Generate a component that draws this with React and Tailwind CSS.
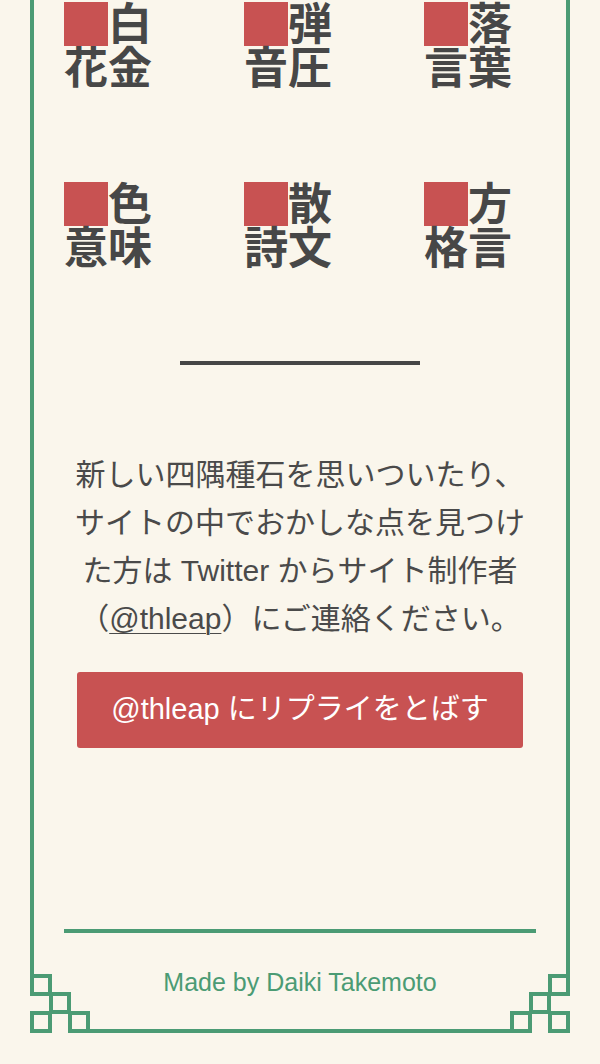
const items = [
  ['白', '花', '金'],
  ['弾', '音', '圧'],
  ['落', '言', '葉'],
  ['色', '意', '味'],
  ['散', '詩', '文'],
  ['方', '格', '言'],
]

function Corner({ flip }) {
  const xs = flip ? [40, 21, 40, 2] : [2, 21, 2, 40]
  const ys = [2, 20, 39, 39]
  return (
    <svg width="60" height="59" viewBox="0 0 60 59" className="flex-none">
      {xs.map((x, i) => (
        <rect key={i} x={x} y={ys[i]} width="18" height="18" fill="none" stroke="#4b9b74" strokeWidth="4" />
      ))}
    </svg>
  )
}

function Item({ chars }) {
  return (
    <div className="grid grid-cols-[44px_44px] grid-rows-[44px_44px] text-[44px] font-bold leading-[46px] text-[#474747]">
      <span className="bg-[#c85252]" />
      {chars.map((c, i) => (
        <span key={i} className="text-center">{c}</span>
      ))}
    </div>
  )
}

export default function App() {
  return (
    <div
      className="h-[1064px] w-[600px] overflow-hidden bg-[#faf6ec]"
      style={{ fontFamily: '"Liberation Sans", "Noto Sans CJK JP", sans-serif' }}
    >
      <div className="mx-[30px] flex flex-col border-x-4 border-[#4b9b74] pb-[41px] pt-[2px]">
        <div className="grid grid-cols-[88px_88px_88px] gap-[92px] pl-[30px]">
          {items.map(([first, ...rest]) => (
            <Item key={first} chars={[first, ...rest]} />
          ))}
        </div>

        <div className="mx-auto mt-[91px] h-[4px] w-[240px] bg-[#464646]" />

        <p className="mt-[86px] text-center text-[30px] leading-[48px] text-[#4a4a4a]">
          新しい四隅種石を思いついたり、
          <br />
          サイトの中でおかしな点を見つけ
          <br />
          た方は Twitter からサイト制作者
          <br />
          （<span className="underline decoration-1 underline-offset-4">@thleap</span>）にご連絡ください。
        </p>

        <button
          type="button"
          className="mx-auto mt-[29px] h-[76px] w-[446px] rounded-[3px] bg-[#c85252] text-[29px] text-white"
        >
          @thleap にリプライをとばす
        </button>

        <div className="mx-auto mt-[181px] h-[4px] w-[472px] bg-[#4b9b74]" />
      </div>

      <div className="mx-[30px] flex h-[59px]">
        <Corner />
        <div className="flex-1 border-b-4 border-[#4b9b74] text-center text-[25px] leading-4 text-[#4b9b74]">
          Made by Daiki Takemoto
        </div>
        <Corner flip />
      </div>
    </div>
  )
}
